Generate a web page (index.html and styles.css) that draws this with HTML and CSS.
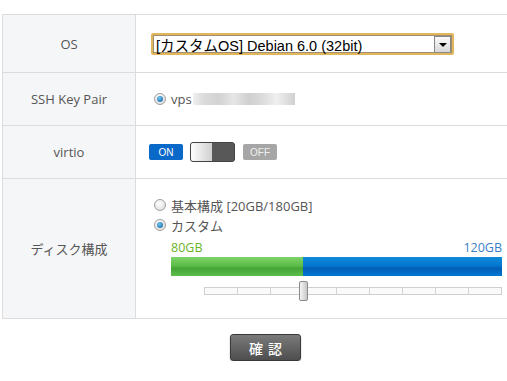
FILE: index.html
```html
<!DOCTYPE html>
<html lang="ja">
<head>
    <meta charset="UTF-8">
    <title>VPS 設定</title>
    <link rel="stylesheet" href="styles.css">
</head>
<body>
    <div class="form">
        <div class="row row-os">
            <div class="label">OS</div>
            <div class="field os">
                <div class="select">
                    <span class="select-text">[カスタムOS] Debian 6.0 (32bit)</span>
                    <span class="select-btn"></span>
                </div>
            </div>
        </div>
        <div class="row row-key">
            <div class="label">SSH Key Pair</div>
            <div class="field key">
                <label class="radio-line"><span class="radio checked"></span>vps<span class="blur"></span></label>
            </div>
        </div>
        <div class="row row-virtio">
            <div class="label">virtio</div>
            <div class="field switch">
                <span class="badge on">ON</span>
                <span class="toggle"><span class="knob"></span></span>
                <span class="badge off">OFF</span>
            </div>
        </div>
        <div class="row row-disk">
            <div class="label">ディスク構成</div>
            <div class="field disk">
                <label class="radio-line"><span class="radio"></span>基本構成 [20GB/180GB]</label>
                <label class="radio-line"><span class="radio checked"></span>カスタム</label>
                <div class="custom">
                    <div class="sizes">
                        <span class="size-a">80GB</span>
                        <span class="size-b">120GB</span>
                    </div>
                    <div class="bar">
                        <div class="bar-a"></div>
                        <div class="bar-b"></div>
                    </div>
                    <div class="slider">
                        <div class="track">
                            <span></span><span></span><span></span><span></span><span></span>
                            <span></span><span></span><span></span><span></span>
                        </div>
                        <span class="thumb"></span>
                    </div>
                </div>
            </div>
        </div>
    </div>
    <div class="actions">
        <button class="confirm">確認</button>
    </div>
</body>
</html>
```

FILE: styles.css
```css
html, body {
    overflow: hidden;
}
body {
    margin: 0;
    background: #ffffff;
    font-family: 'Open Sans', 'Noto Sans CJK JP', sans-serif;
    font-size: 13px;
    color: #555;
}
.form {
    margin: 14px 0 0 2px;
    width: 520px;
    border-top: 1px solid #dcdcdc;
}
.row {
    display: grid;
    grid-template-columns: 134px 1fr;
    border-bottom: 1px solid #dcdcdc;
}
.label {
    background: #f5f6f8;
    border-left: 1px solid #dcdcdc;
    border-right: 1px solid #dcdcdc;
    display: flex;
    align-items: center;
    justify-content: center;
}
.field {
    display: flex;
    align-items: center;
}
.row-os { height: 57px; }
.row-key { height: 52px; }
.row-virtio { height: 52px; }
.row-disk { height: 139px; }

/* select box */
.os { padding-left: 15px; }
.select {
    width: 299px;
    height: 18px;
    border: 2px solid #e2b65c;
    border-radius: 2px;
    display: flex;
    align-items: center;
    justify-content: space-between;
    background: #fff;
    box-shadow: inset 0 0 0 1px #a09070;
    margin-top: 1px;
}
.select-text {
    font-family: 'Liberation Sans', 'Noto Sans CJK JP', sans-serif;
    font-size: 14.5px;
    color: #000;
    padding-left: 3px;
}
.select-btn {
    width: 15px;
    height: 15px;
    margin-right: 1px;
    border: 1px solid #888;
    background: linear-gradient(#fafafa, #d8d8d8);
    position: relative;
}
.select-btn::after {
    content: '';
    position: absolute;
    left: 4px;
    top: 6px;
    border-left: 4px solid transparent;
    border-right: 4px solid transparent;
    border-top: 4px solid #000;
}

/* radios */
.key { padding-left: 18px; }
.radio-line {
    display: flex;
    align-items: center;
    gap: 5px;
    color: #555;
}
.radio {
    width: 10px;
    height: 10px;
    border-radius: 50%;
    border: 1px solid #a0a0a0;
    background: radial-gradient(circle at 40% 35%, #ffffff, #d8d8d8);
    position: relative;
    flex: none;
}
.radio.checked::after {
    content: '';
    position: absolute;
    left: 2px;
    top: 2px;
    width: 6px;
    height: 6px;
    border-radius: 50%;
    background: radial-gradient(circle at 40% 35%, #6fc6f0, #0b5a98);
}
.blur {
    width: 102px;
    height: 12px;
    margin-left: -4px;
    background: linear-gradient(90deg, #f0f0f0 0, #dcdcdc 10%, #d2d2d2 25%, #e6e6e6 40%, #cfcfcf 55%, #dedede 70%, #f0f0f0 82%, #d0d0d0 100%);
}

/* virtio switch */
.switch {
    padding-left: 13px;
    gap: 7px;
}
.badge {
    height: 16px;
    width: 34px;
    border-radius: 2px;
    color: #fff;
    font-size: 10px;
    display: flex;
    align-items: center;
    justify-content: center;
    font-family: 'Liberation Sans', sans-serif;
}
.badge.on { background: #0a68c8; }
.badge.off { background: #a6a6a6; color: #eee; margin-left: 1px; }
.toggle {
    width: 43px;
    height: 18px;
    border: 1px solid #444;
    border-radius: 3px;
    background: #585858;
    display: flex;
}
.knob {
    width: 21px;
    height: 18px;
    border-radius: 2px 0 0 2px;
    background: linear-gradient(90deg, #fdfdfd, #d0d0d0);
}

/* disk */
.disk {
    flex-direction: column;
    align-items: stretch;
    justify-content: flex-start;
    padding: 16px 0 0 18px;
}
.disk .radio-line {
    height: 20px;
}
.custom {
    padding-left: 17px;
}
.sizes {
    display: flex;
    justify-content: space-between;
    margin-top: 4px;
    height: 18px;
    line-height: 18px;
    font-size: 12.5px;
    width: 331px;
}
.size-a { color: #6ab42a; }
.size-b { color: #3a7fc8; }
.bar {
    display: flex;
    height: 19px;
    width: 331px;
}
.bar-a {
    width: 132px;
    background: linear-gradient(#7ed36a, #5cbd48 45%, #45a437 60%, #5cbf4a);
}
.bar-b {
    flex: 1;
    background: linear-gradient(#0f8ad8, #0478d0 45%, #035fb8 60%, #0078d2);
}
.slider {
    position: relative;
    margin: 5px 0 0 33px;
    width: 298px;
    height: 20px;
}
.track {
    position: absolute;
    top: 6px;
    left: 0;
    right: 0;
    height: 6px;
    border: 1px solid #cfcfcf;
    background: #fafafa;
    display: flex;
}
.track span {
    flex: 1;
    border-right: 1px solid #d4d4d4;
}
.track span:last-child { border-right: none; }
.thumb {
    position: absolute;
    left: 95px;
    top: 0;
    width: 7px;
    height: 18px;
    border: 1px solid #8a8a8a;
    border-radius: 2px;
    background: linear-gradient(90deg, #f4f4f4, #c8c8c8);
}

/* button */
.actions {
    display: flex;
    margin-top: 15px;
    padding-left: 230px;
}
.confirm {
    width: 71px;
    height: 27px;
    border: 1px solid #3a3a3a;
    border-radius: 3px;
    background: linear-gradient(#7a7a7a, #4e4e4e);
    color: #fff;
    font-family: 'Noto Sans CJK JP', sans-serif;
    font-size: 14px;
    font-weight: 500;
    letter-spacing: 5px;
    padding: 0 0 0 5px;
    box-shadow: 0 1px 2px rgba(0, 0, 0, 0.25);
}
```
